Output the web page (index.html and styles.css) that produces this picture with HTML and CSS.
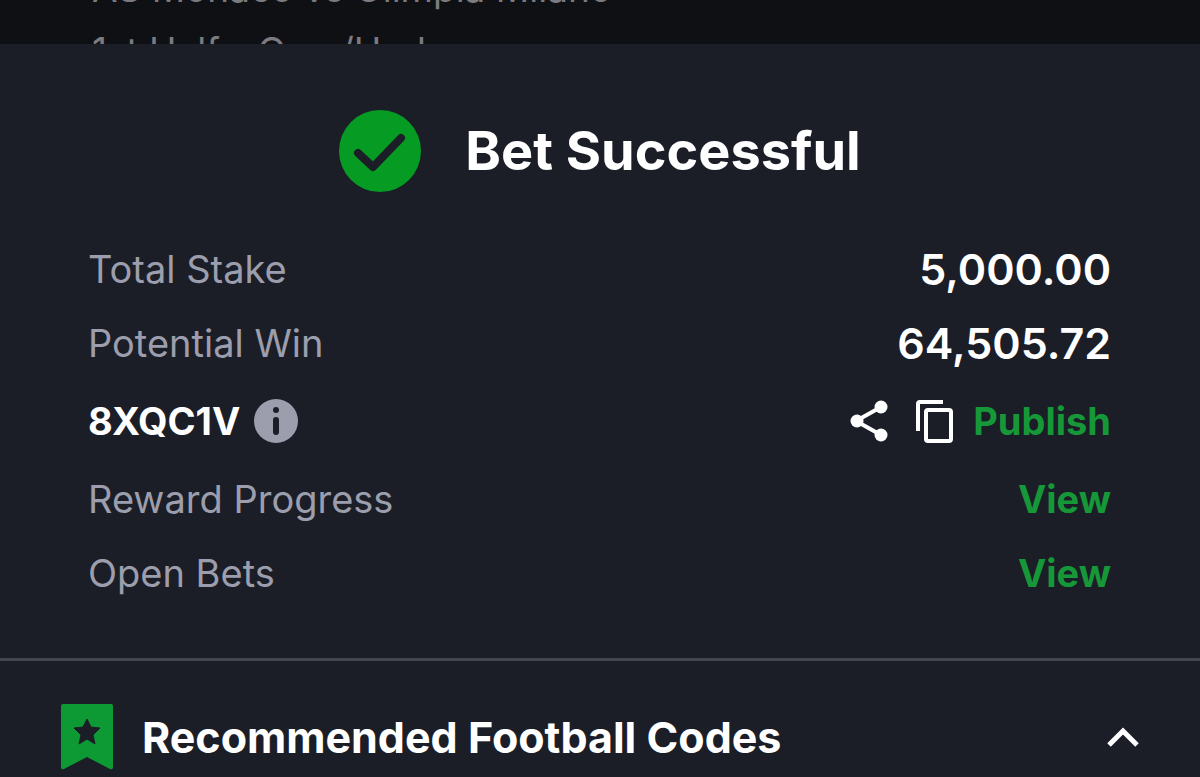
FILE: index.html
```
<!DOCTYPE html>
<html lang="en">
<head>
  <meta charset="UTF-8">
  <title>Bet Successful</title>
  <meta name="viewport" content="width=device-width, initial-scale=1.0">
  <link rel="stylesheet" href="styles.css">
</head>
<body>

  <div class="betslip">
    <div>AS Monaco vs Olimpia Milano</div>
    <div>1st Half - Over/Under</div>
  </div>

  <main class="sheet">
    <header class="sheet-header">
      <svg width="82" height="82" viewBox="0 0 82 82" aria-hidden="true">
        <circle cx="41" cy="41" r="41" fill="#069b22"/>
        <path d="M19 43 34 57 62 28" fill="none" stroke="#1b1e27" stroke-width="8" stroke-linecap="round" stroke-linejoin="round"/>
      </svg>
      <h1>Bet Successful</h1>
    </header>

    <div class="details">
      <div class="row">
        <span class="label">Total Stake</span>
        <span class="amount">5,000.00</span>
      </div>
      <div class="row">
        <span class="label">Potential Win</span>
        <span class="amount">64,505.72</span>
      </div>
      <div class="row code-row">
        <div class="code">
          <span>8XQC1V</span>
          <button type="button" aria-label="Booking code info">
            <svg width="44" height="44" viewBox="0 0 44 44">
              <circle cx="22" cy="22" r="22" fill="#9c9ead"/>
              <circle cx="22" cy="11" r="3" fill="#1b1e27"/>
              <path d="M22 21V33" stroke="#1b1e27" stroke-width="6" stroke-linecap="round"/>
            </svg>
          </button>
        </div>
        <div class="actions">
          <button type="button" aria-label="Share">
            <svg width="38" height="42" viewBox="0 0 38 42">
              <path d="M31 7 6 21 31 35" fill="none" stroke="#fff" stroke-width="4"/>
              <circle cx="31" cy="7" r="6.5" fill="#fff"/>
              <circle cx="7" cy="21" r="6.5" fill="#fff"/>
              <circle cx="31" cy="35" r="6.5" fill="#fff"/>
            </svg>
          </button>
          <button type="button" aria-label="Copy">
            <svg width="37" height="43" viewBox="0 0 37 43" fill="none" stroke="#fff" stroke-width="4">
              <path d="M2 31V4Q2 2 4 2H27"/>
              <rect x="10" y="10" width="25" height="31" rx="2"/>
            </svg>
          </button>
          <a href="#">Publish</a>
        </div>
      </div>
      <div class="row">
        <span class="label">Reward Progress</span>
        <a href="#">View</a>
      </div>
      <div class="row">
        <span class="label">Open Bets</span>
        <a href="#">View</a>
      </div>
    </div>

    <section class="recommended">
      <svg width="54" height="66" viewBox="0 0 54 66" aria-hidden="true">
        <path d="M3 0H51Q53 0 53 2V63Q53 66 50 65L27 53 4 65Q1 66 1 63V2Q1 0 3 0Z" fill="#0d9a34"/>
        <path d="M27 15 31 23 40 24 33 31 35 40 27 35 19 40 21 31 14 24 23 23Z" fill="#1b1e27" stroke="#1b1e27" stroke-linejoin="round"/>
      </svg>
      <h2>Recommended Football Codes</h2>
      <button type="button" aria-label="Collapse">
        <svg width="34" height="22" viewBox="0 0 34 22">
          <path d="M3 19 17 5 31 19" fill="none" stroke="#fff" stroke-width="5"/>
        </svg>
      </button>
    </section>
  </main>

</body>
</html>
```
FILE: styles.css
```
body {
  margin: 0;
  background: #1b1e27;
  color: #fff;
  font-family: Inter, sans-serif;
  font-size: 38px;
  overflow: hidden;
}
h1,
h2 {
  margin: 0;
}
svg {
  display: block;
}
button {
  padding: 0;
  background: none;
  border: none;
  cursor: pointer;
}
a {
  color: #169838;
  font-weight: 700;
  text-decoration: none;
}

/* the betslip that shows above the sheet */
.betslip {
  display: flex;
  flex-direction: column;
  justify-content: flex-end;
  height: 44px;
  padding-left: 92px;
  overflow: hidden;
  background: #0f1014;
  color: #7b7b80;
  font-size: 37px;
  line-height: 62px;
}
.betslip div:last-child {
  margin-bottom: -38px;
}

.sheet-header {
  display: flex;
  align-items: center;
  justify-content: center;
  gap: 44px;
  padding: 66px 0 40px;
}
.sheet-header h1 {
  font-size: 54px;
  font-weight: 700;
  line-height: 82px;
}

.details {
  padding: 0 89px 48px 88px;
}
.row {
  display: flex;
  align-items: center;
  justify-content: space-between;
  height: 74px;
}
.code-row {
  height: 82px;
}
.label {
  color: #9c9ead;
}
.amount {
  font-size: 43px;
  font-weight: 600;
}
.code,
.actions {
  display: flex;
  align-items: center;
}
.code {
  gap: 14px;
  font-weight: 700;
}
.actions {
  gap: 28px;
}
.actions a {
  margin-left: -8px;
}

.recommended {
  display: flex;
  align-items: center;
  padding: 43px 60px 8px;
  border-top: 3px solid #45474f;
}
.recommended h2 {
  flex: 1;
  margin-left: 28px;
  font-size: 43px;
  font-weight: 700;
  line-height: 66px;
}
```
